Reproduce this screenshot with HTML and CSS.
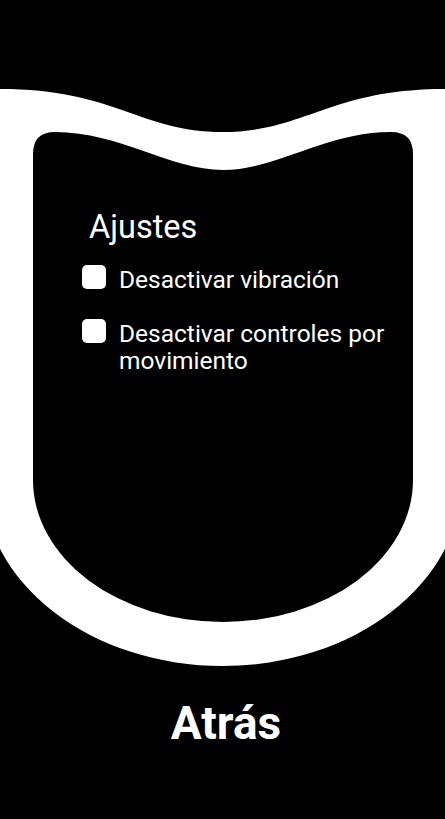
FILE: index.html
```html
<!DOCTYPE html>
<html lang="es">
<head>
<meta charset="utf-8">
<title>Ajustes</title>
<link rel="stylesheet" href="styles.css">
</head>
<body>
<div class="stage">
  <svg class="shape" viewBox="0 0 445 690" width="445" height="690" aria-hidden="true">
    <path fill="#fff" d="M -17 480 L -17 89 L 0 89 C 115 89 140 132 222.5 132 C 305 132 330 89 445 89 L 462 89 L 462 480 A 239.5 186 0 0 1 -17 480 Z"/>
    <path fill="#000" d="M 33 480 L 33 154 Q 33 132 55 132 C 120 132 170 170 223 170 C 276 170 326 132 391 132 Q 413 132 413 154 L 413 480 A 190 142 0 0 1 33 480 Z"/>
  </svg>
  <div class="panel">
    <h1 class="title">Ajustes</h1>
    <label class="option">
      <span class="box"></span>
      <span class="text">Desactivar vibración</span>
    </label>
    <label class="option">
      <span class="box"></span>
      <span class="text">Desactivar controles por movimiento</span>
    </label>
  </div>
</div>
<div class="back">Atrás</div>
</body>
</html>
```

FILE: styles.css
```css
html, body {
  margin: 0;
  padding: 0;
  background: #000;
}

body {
  width: 445px;
  height: 819px;
  overflow: hidden;
  color: #fff;
  font-family: Roboto, "Noto Sans", sans-serif;
}

.stage {
  display: grid;
  width: 445px;
  height: 690px;
}

.shape,
.panel {
  grid-area: 1 / 1;
}

.shape {
  display: block;
}

.panel {
  display: flex;
  flex-direction: column;
  padding: 208px 32px 0 82px;
}

.title {
  margin: 0 0 20px 7px;
  font-size: 32.5px;
  line-height: 38px;
  font-weight: 400;
}

.option {
  display: flex;
  align-items: flex-start;
  gap: 13px;
  margin-bottom: 27px;
  font-size: 24.5px;
  line-height: 27px;
}

.box {
  flex: none;
  width: 24px;
  height: 24px;
  margin-top: -1px;
  border-radius: 5px;
  background: #fff;
}

.text {
  flex: 1;
}

.back {
  margin-top: 6px;
  text-align: center;
  font-size: 46px;
  line-height: 54px;
  font-weight: 700;
  padding-left: 7px;
}
```
